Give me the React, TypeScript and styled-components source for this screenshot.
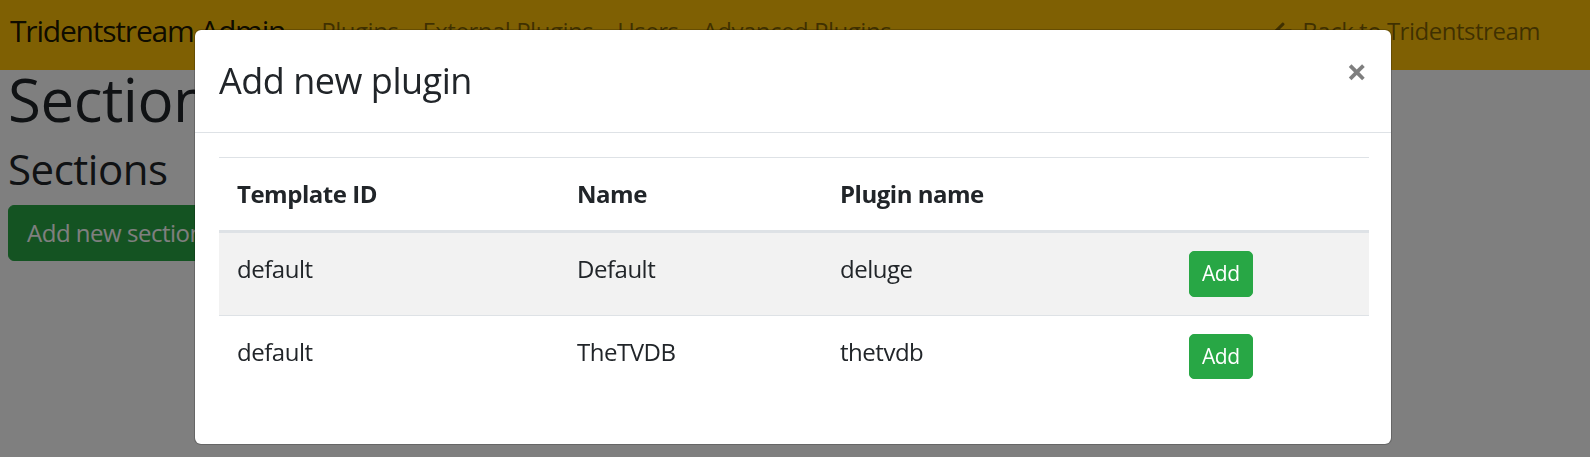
import React from 'react';
import styled, { createGlobalStyle } from 'styled-components';
import { FaArrowLeft } from 'react-icons/fa';

const GlobalStyle = createGlobalStyle`
  html, body { margin: 0; padding: 0; }
  body {
    font-family: "Open Sans", "Noto Sans", sans-serif;
    font-size: 24px;
    line-height: 1.5;
    letter-spacing: -0.02em;
    color: #212529;
    background: #fff;
    overflow: hidden;
  }
  * { box-sizing: border-box; }
`;

const Navbar = styled.nav`
  display: flex;
  align-items: center;
  height: 70px;
  padding: 8px 38px 17px 10px;
  background: #ffc107;
`;

const Brand = styled.a`
  font-size: 30px;
  line-height: 45px;
  letter-spacing: -0.04em;
  color: rgba(0, 0, 0, 0.9);
  margin-right: 24px;
  text-decoration: none;
  white-space: nowrap;
`;

const NavList = styled.ul`
  display: flex;
  list-style: none;
  margin: 0;
  padding: 0;
  flex: 1;
`;

const NavLink = styled.a`
  display: flex;
  align-items: center;
  gap: 9px;
  padding: 0 12px;
  color: rgba(0, 0, 0, 0.5);
  font-size: 24px;
  line-height: 36px;
  text-decoration: none;
  white-space: nowrap;
`;

const Main = styled.main`
  padding: 0 8px;
`;

const PageTitle = styled.h1`
  margin: -7px 0 9px;
  font-size: 60px;
  font-weight: 500;
  line-height: 1.2;
`;

const SectionTitle = styled.h3`
  margin: 0 0 11px;
  font-size: 42px;
  font-weight: 500;
  line-height: 1.2;
`;

const PrimaryButton = styled.button`
  font-family: inherit;
  letter-spacing: inherit;
  font-size: 24px;
  line-height: 36px;
  padding: 9px 18px;
  border: 1px solid #28a745;
  border-radius: 6px;
  background: #28a745;
  color: #fff;
`;

const Backdrop = styled.div`
  position: fixed;
  inset: 0;
  background: rgba(0, 0, 0, 0.5);
`;

const ModalLayer = styled.div`
  position: fixed;
  inset: 0;
  overflow: hidden;
`;

const Dialog = styled.div`
  width: 1198px;
  margin: 29px 0 0 194px;
`;

const Content = styled.div`
  background: #fff;
  background-clip: padding-box;
  border: 1px solid rgba(0, 0, 0, 0.2);
  border-radius: 7px;
`;

const Header = styled.div`
  display: flex;
  align-items: flex-start;
  justify-content: space-between;
  padding: 24px;
  border-bottom: 1px solid #dee2e6;
`;

const Title = styled.h4`
  margin: 0;
  font-size: 36px;
  font-weight: 500;
  line-height: 1.5;
`;

const Close = styled.button`
  font-family: inherit;
  background: transparent;
  border: 0;
  padding: 24px;
  margin: -24px -24px -24px auto;
  font-size: 36px;
  font-weight: 700;
  line-height: 1;
  color: #000;
  opacity: 0.5;
`;

const Body = styled.div`
  padding: 24px;
`;

const Table = styled.table`
  width: 100%;
  border-collapse: collapse;
  table-layout: fixed;
  margin-bottom: 23px;
`;

const Th = styled.th`
  padding: 18px;
  text-align: left;
  vertical-align: bottom;
  font-weight: 700;
  border-top: 1px solid #dee2e6;
  border-bottom: 3px solid #dee2e6;
`;

const Row = styled.tr<{ $striped?: boolean }>`
  background: ${(p) => (p.$striped ? 'rgba(0,0,0,0.05)' : 'transparent')};
`;

const Td = styled.td`
  padding: 18px;
  vertical-align: top;
  border-top: 1px solid #dee2e6;
`;

const AddButton = styled.button`
  display: inline-block;
  vertical-align: top;
  font-family: inherit;
  letter-spacing: inherit;
  font-size: 21px;
  line-height: 1.5;
  padding: 6px 12px;
  border: 1px solid #28a745;
  border-radius: 5px;
  background: #28a745;
  color: #fff;
`;

const plugins = [
  { template: 'default', name: 'Default', plugin: 'deluge' },
  { template: 'default', name: 'TheTVDB', plugin: 'thetvdb' },
];

export default function App() {
  return (
    <>
      <GlobalStyle />
      <Navbar>
        <Brand href="#">Tridentstream Admin</Brand>
        <NavList>
          <li><NavLink href="#">Plugins</NavLink></li>
          <li><NavLink href="#">External Plugins</NavLink></li>
          <li><NavLink href="#">Users</NavLink></li>
          <li><NavLink href="#">Advanced Plugins</NavLink></li>
        </NavList>
        <NavLink href="#">
          <FaArrowLeft size={20} />
          Back to Tridentstream
        </NavLink>
      </Navbar>
      <Main>
        <PageTitle>Sections</PageTitle>
        <SectionTitle>Sections</SectionTitle>
        <PrimaryButton>Add new section</PrimaryButton>
      </Main>
      <Backdrop />
      <ModalLayer>
        <Dialog>
          <Content>
            <Header>
              <Title>Add new plugin</Title>
              <Close aria-label="Close">×</Close>
            </Header>
            <Body>
              <Table>
                <colgroup>
                  <col style={{ width: 340 }} />
                  <col style={{ width: 263 }} />
                  <col style={{ width: 349 }} />
                  <col style={{ width: 198 }} />
                </colgroup>
                <thead>
                  <tr>
                    <Th>Template ID</Th>
                    <Th>Name</Th>
                    <Th>Plugin name</Th>
                    <Th />
                  </tr>
                </thead>
                <tbody>
                  {plugins.map((p, i) => (
                    <Row key={p.plugin} $striped={i % 2 === 0}>
                      <Td>{p.template}</Td>
                      <Td>{p.name}</Td>
                      <Td>{p.plugin}</Td>
                      <Td><AddButton>Add</AddButton></Td>
                    </Row>
                  ))}
                </tbody>
              </Table>
            </Body>
          </Content>
        </Dialog>
      </ModalLayer>
    </>
  );
}
